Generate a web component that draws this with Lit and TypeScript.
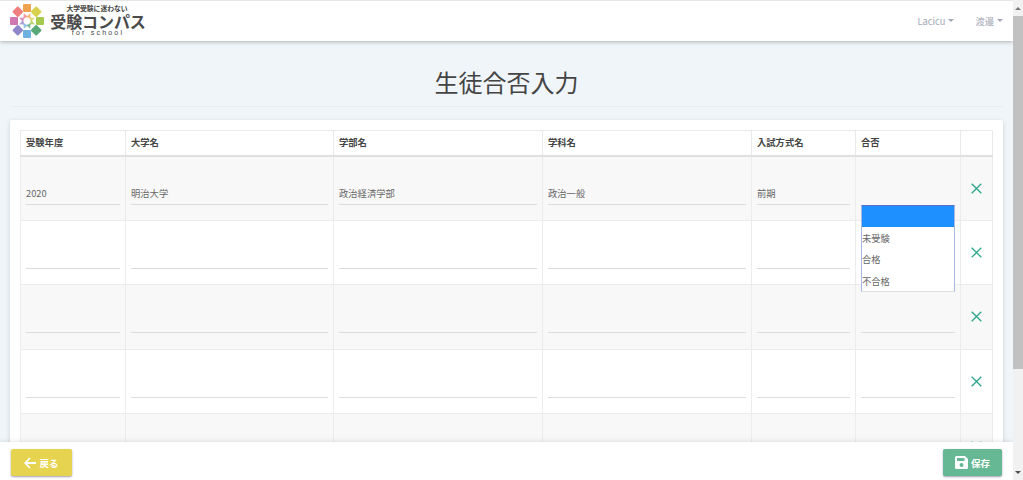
import { LitElement, html, css, svg } from "lit";
import { customElement } from "lit/decorators.js";

const petals = [
  ["#f0a34e", 0], ["#d9d04f", 45], ["#a5c84f", 90], ["#58a878", 135],
  ["#6db2e0", 180], ["#8f86cc", 225], ["#cf77b0", 270], ["#ef7f7f", 315],
] as const;

const rows = [
  { y: "2020", u: "明治大学", f: "政治経済学部", d: "政治一般", m: "前期", open: true },
  { y: "", u: "", f: "", d: "", m: "", open: false },
  { y: "", u: "", f: "", d: "", m: "", open: false },
  { y: "", u: "", f: "", d: "", m: "", open: false },
  { y: "", u: "", f: "", d: "", m: "", open: false },
];

@customElement("app-root")
export class AppRoot extends LitElement {
  static styles = css`
    :host {
      display: flex;
      width: 1023px;
      height: 480px;
      overflow: hidden;
      font-family: "Noto Sans CJK JP", "Noto Sans", sans-serif;
      font-size: 9.3px;
      color: #555;
      background: #f0f5f9;
    }
    .page { position: relative; width: 1013px; height: 480px; overflow: hidden; flex: none; }
    .topbar {
      height: 41px; box-sizing: border-box; background: #fff; border-top: 1px solid #e6e6e6;
      box-shadow: 0 1px 4px rgba(0,0,0,.28);
      display: flex; align-items: center; padding: 0 10px; position: relative; z-index: 2;
    }
    .logo { display: flex; align-items: center; gap: 6px; }
    .logo-text { display: flex; flex-direction: column; align-items: center; color: #444; width: 96px; margin-top: -1px; }
    .tag { font-size: 6.8px; line-height: 6px; font-weight: 700; margin-right: 2px; }
    .brand { font-size: 16px; line-height: 16px; font-weight: 700; letter-spacing: -.1px; white-space: nowrap; color: #4a4a4a; margin-top: 2px; }
    .school { font-family: "Liberation Sans", sans-serif; font-size: 7px; line-height: 8px; letter-spacing: 2.2px; }
    .nav { margin-left: auto; display: flex; gap: 21px; color: #a3a8b5; font-size: 9.3px; padding-bottom: 1px; }
    .nav span { display: flex; align-items: center; gap: 3px; }
    .caret { width: 0; height: 0; border: 3px solid transparent; border-top: 3px solid #a3a8b5; border-bottom: 0; }
    .title-wrap { margin: 0 10px; height: 66px; box-sizing: border-box; border-bottom: 1px solid #e8edf1; display: flex; justify-content: center; align-items: center; padding-top: 16px; }
    h1 { margin: 0; font-weight: 400; font-size: 24px; line-height: 30px; color: #444; }
    .card {
      margin: 13px 10px 0; background: #fff; padding: 10px; border-radius: 2px; height: 400px;
      box-shadow: 0 1px 5px rgba(0,0,0,.14);
    }
    table { border-collapse: collapse; table-layout: fixed; width: 972px; }
    th { height: 25px; box-sizing: border-box; font-weight: 700; color: #444; text-align: left; padding: 0 5px 2px; border: 1px solid #e9e9e9; border-bottom: 2px solid #e0e0e0; font-size: 9.3px; }
    td { padding: 0 5px; border: 1px solid #ececec; height: 64.6px; box-sizing: border-box; vertical-align: top; position: relative; }
    tr.odd td { background: #f8f8f8; }
    .field { height: 48px; box-sizing: border-box; border-bottom: 1px solid #dcdcdc; display: flex; align-items: flex-end; padding-bottom: 4px; line-height: 14px; color: #666; }
    .x { text-align: center; vertical-align: middle; padding: 0; }
    .x svg { display: block; margin: 0 auto; }
    .list {
      position: absolute; z-index: 1; left: 5px; top: 48px; width: 94px; height: 87px; box-sizing: border-box;
      background: #fff; border: 1px solid #aab8e4; border-top: 1px solid #5f6fd0; border-bottom: 1px solid #ddd; color: #666;
    }
    .opt { height: 21.3px; line-height: 21.3px; }
    .sel { background: #1e90ff; height: 21.5px; margin-bottom: 1px; }
    .footer {
      position: absolute; left: 0; right: 0; bottom: 0; height: 38px; background: #fff; z-index: 3;
      box-shadow: 0 -1px 4px rgba(0,0,0,.1);
      display: flex; justify-content: space-between; padding: 7px 11px 0; box-sizing: border-box;
    }
    .btn { height: 27px; border-radius: 2px; color: #fff; font-weight: 700; display: flex; align-items: center; justify-content: center; gap: 3px; box-shadow: 0 1px 2px rgba(40,40,90,.45); font-size: 9.5px; }
    .back { width: 61px; background: #e6d34f; }
    .save { width: 59px; background: #66b894; }
    .scroll { width: 10px; background: #f1f1f1; position: relative; display: flex; flex-direction: column; align-items: center; }
    .arrow { height: 16px; flex: none; display: flex; align-items: center; justify-content: center; }
    .up { width: 0; height: 0; border: 3px solid transparent; border-bottom: 3px solid #777; border-top: 0; }
    .down { width: 0; height: 0; border: 3px solid transparent; border-top: 3px solid #505050; border-bottom: 0; }
    .thumb { width: 100%; height: 353px; background: #c1c1c1; flex: none; }
    .track { flex: 1; }
  `;

  private logo() {
    return html`<svg width="34" height="36" viewBox="-17 -18 34 36">
      ${petals.map(([c, a]) => svg`<rect x="-4" y="-17" width="8" height="8" rx="1" fill=${c} transform="rotate(${a})" />`)}
      ${petals.map(([c, a]) => svg`<path d="M0 -8.5 L2.4 -3.5 L-2.4 -3.5 Z" fill=${c} opacity=".75" transform="rotate(${a + 22.5})" />`)}
      <circle r="2" fill="#fff" />
    </svg>`;
  }

  render() {
    return html`
      <div class="page">
        <header class="topbar">
          <div class="logo">
            ${this.logo()}
            <div class="logo-text">
              <div class="tag">大学受験に迷わない</div>
              <div class="brand">受験コンパス</div>
              <div class="school">for school</div>
            </div>
          </div>
          <nav class="nav">
            <span>Lacicu <i class="caret"></i></span>
            <span>渡邉 <i class="caret"></i></span>
          </nav>
        </header>
        <div class="title-wrap"><h1>生徒合否入力</h1></div>
        <section class="card">
          <table>
            <colgroup>
              <col style="width:105px" /><col style="width:208px" /><col style="width:209px" />
              <col style="width:209px" /><col style="width:104px" /><col style="width:105px" /><col style="width:32px" />
            </colgroup>
            <thead><tr><th>受験年度</th><th>大学名</th><th>学部名</th><th>学科名</th><th>入試方式名</th><th>合否</th><th></th></tr></thead>
            <tbody>
              ${rows.map((r, i) => html`
                <tr class=${i % 2 === 0 ? "odd" : ""}>
                  <td><div class="field">${r.y}</div></td>
                  <td><div class="field">${r.u}</div></td>
                  <td><div class="field">${r.f}</div></td>
                  <td><div class="field">${r.d}</div></td>
                  <td><div class="field">${r.m}</div></td>
                  <td>${r.open
                    ? html`<div class="list"><div class="sel"></div><div class="opt">未受験</div><div class="opt">合格</div><div class="opt">不合格</div></div>`
                    : html`<div class="field"></div>`}</td>
                  <td class="x"><svg width="11" height="11" viewBox="0 0 11 11" fill="none" stroke="#2aa58c" stroke-width="1.3"><path d="M.7.7l9.6 9.6M10.3.7L.7 10.3" /></svg></td>
                </tr>`)}
            </tbody>
          </table>
        </section>
        <footer class="footer">
          <div class="btn back">
            <svg width="12" height="12" viewBox="0 0 12 12" fill="none" stroke="#fff" stroke-width="1.8"><path d="M6 1L1.2 6 6 11M1.5 6H12" /></svg>
            戻る
          </div>
          <div class="btn save">
            <svg width="13" height="13" viewBox="0 0 13 13"><path fill="#fff" fill-rule="evenodd" d="M1.5 0H10l3 3v8.5a1.5 1.5 0 0 1-1.5 1.5h-10A1.5 1.5 0 0 1 0 11.5v-10A1.5 1.5 0 0 1 1.5 0zM2 2v3h7.5V2zM6.5 7a2 2 0 1 0 0 4 2 2 0 0 0 0-4z" /></svg>
            保存
          </div>
        </footer>
      </div>
      <div class="scroll">
        <div class="arrow"><i class="up"></i></div>
        <div class="thumb"></div>
        <div class="track"></div>
        <div class="arrow"><i class="down"></i></div>
      </div>
    `;
  }
}
